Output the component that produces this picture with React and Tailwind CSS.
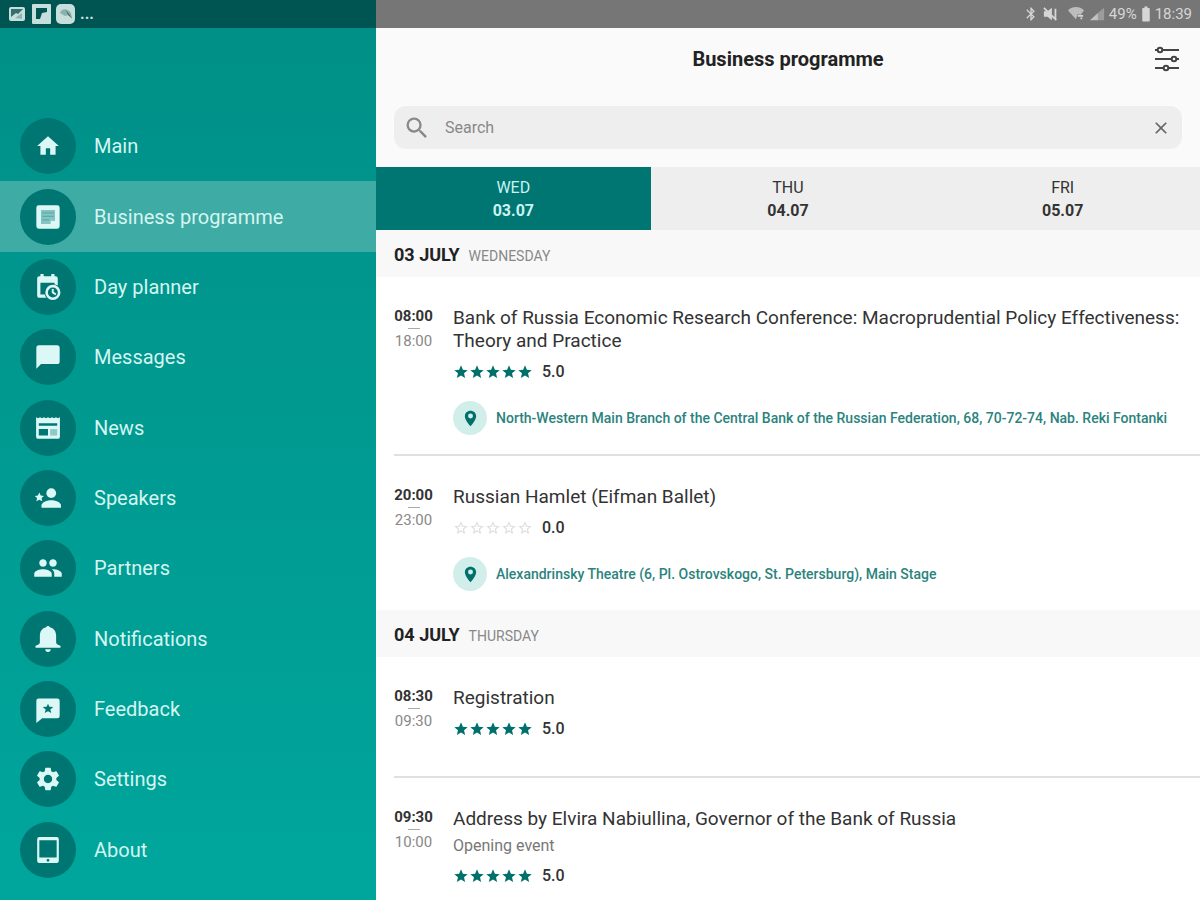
import {
  MdBatteryFull,
  MdBluetooth,
  MdChatBubble,
  MdClose,
  MdGroup,
  MdHome,
  MdSearch,
  MdSettings,
  MdStar,
  MdStarBorder,
} from "react-icons/md";

const svgProps = { viewBox: "0 0 24 24", fill: "currentColor", "aria-hidden": true };

function ProgrammeIcon({ className }) {
  return (
    <svg {...svgProps} className={className}>
      <path
        fillRule="evenodd"
        d="M4 2h16a2 2 0 0 1 2 2v16a2 2 0 0 1-2 2H4a2 2 0 0 1-2-2V4a2 2 0 0 1 2-2ZM6 6v12h8v-3h4V6Z"
      />
      <path opacity=".6" d="M6 6h12v9h-4v3H6Z" />
      <path className="text-[#007673]" fill="currentColor" opacity=".3" d="M7 8h10v1H7zM7 11h10v1H7zM7 14h6v1H7z" />
    </svg>
  );
}

function PlannerIcon({ className }) {
  return (
    <svg {...svgProps} className={className}>
      <path d="M5 0h3v2h7V0h3v2h1a2 2 0 0 1 2 2v6.500a7 7 0 0 0-3-.7V8H5v11h4a7 7 0 0 0 1.500 3H4a2 2 0 0 1-2-2V4a2 2 0 0 1 2-2h1Z" />
      <path
        fillRule="evenodd"
        d="M16.500 10a7 7 0 1 1 0 14a7 7 0 0 1 0-14Zm0 2.400a4.600 4.600 0 1 0 0 9.200a4.600 4.600 0 0 0 0-9.200Zm-1 1.400h1.800v2.900l2.400 1.400l-.9 1.500l-3.300-2Z"
      />
    </svg>
  );
}

function NewsIcon({ className }) {
  return (
    <svg {...svgProps} className={className}>
      <path
        fillRule="evenodd"
        d="M1 2l1.800 1L4.700 2l1.800 1L8.300 2l1.900 1L12 2l1.800 1L15.700 2l1.800 1L19.300 2l1.900 1L23 2v18a2 2 0 0 1-2 2H3a2 2 0 0 1-2-2ZM3.500 7.500V10h17V7.500ZM3.500 13v6H12v-6Z"
      />
      <path className="text-[#007673]" fill="currentColor" opacity=".35" d="M14 13h6.500v6H14Z" />
    </svg>
  );
}

function SpeakersIcon({ className }) {
  return (
    <svg {...svgProps} className={className}>
      <circle cx="15" cy="7.500" r="4.500" />
      <path d="M15 14c-3.300 0-9 1.600-9 4.700V21h18v-2.300C24 15.600 18.300 14 15 14Z" />
      <path d="m4 7 1.300 2.700 3 .4-2.200 2 .6 3L4 13.600l-2.700 1.500.6-3-2.200-2 3-.4Z" />
    </svg>
  );
}

function BellIcon({ className }) {
  return (
    <svg {...svgProps} className={className}>
      <path d="M12 0a2 2 0 0 1 1.700 1.200C17.400 2 19.500 5 19.500 9v6c0 1.500 1 2.500 4 3.200V20H.5v-1.800c3-.7 4-1.700 4-3.200V9c0-4 2.100-7 5.800-7.800A2 2 0 0 1 12 0ZM9.500 21.500h5a2.500 2.500 0 0 1-5 0Z" />
    </svg>
  );
}

function FeedbackIcon({ className }) {
  return (
    <svg {...svgProps} className={className}>
      <path
        fillRule="evenodd"
        d="M4 3h16a2 2 0 0 1 2 2v13a2 2 0 0 1-2 2H7l-5 4V5a2 2 0 0 1 2-2Zm8 4.500-1.200 2.500-3.300.3 2.500 2.200-.8 3 2.800-1.500 2.800 1.500-.8-3 2.500-2.200-3.300-.3Z"
      />
    </svg>
  );
}

function AboutIcon({ className }) {
  return (
    <svg {...svgProps} className={className}>
      <path
        fillRule="evenodd"
        d="M4 0h16a2 2 0 0 1 2 2v20a2 2 0 0 1-2 2H4a2 2 0 0 1-2-2V2a2 2 0 0 1 2-2Zm0 3v16h16V3Zm8 17.200a1.300 1.300 0 1 0 0 2.600a1.300 1.300 0 0 0 0-2.600Z"
      />
    </svg>
  );
}

function PinIcon({ className }) {
  return (
    <svg {...svgProps} className={className}>
      <path
        fillRule="evenodd"
        d="M12 1c4.700 0 8 3.400 8 7.800C20 14.500 12 23 12 23S4 14.500 4 8.800C4 4.400 7.300 1 12 1Zm0 4a3.500 3.500 0 1 0 0 7a3.500 3.500 0 0 0 0-7Z"
      />
    </svg>
  );
}

function FilterIcon({ className }) {
  return (
    <svg viewBox="0 0 26 26" fill="none" stroke="currentColor" strokeWidth="2" className={className} aria-hidden="true">
      <path d="M1 4h3M8 4h17M1 13h17M22 13h3M1 22h9M14 22h11" />
      <circle cx="6" cy="4" r="2.300" />
      <circle cx="20" cy="13" r="2.300" />
      <circle cx="12" cy="22" r="2.300" />
    </svg>
  );
}

const MENU = [
  { label: "Main", Icon: MdHome, size: "size-[26px]" },
  { label: "Business programme", Icon: ProgrammeIcon, size: "size-7" },
  { label: "Day planner", Icon: PlannerIcon, size: "size-[26px]" },
  { label: "Messages", Icon: MdChatBubble, size: "size-7" },
  { label: "News", Icon: NewsIcon, size: "size-[26px]" },
  { label: "Speakers", Icon: SpeakersIcon, size: "size-[26px]" },
  { label: "Partners", Icon: MdGroup, size: "size-[30px]" },
  { label: "Notifications", Icon: BellIcon, size: "size-[26px]" },
  { label: "Feedback", Icon: FeedbackIcon, size: "size-7" },
  { label: "Settings", Icon: MdSettings, size: "size-7" },
  { label: "About", Icon: AboutIcon, size: "size-[26px]" },
];

const DAYS = [
  { name: "WED", date: "03.07" },
  { name: "THU", date: "04.07" },
  { name: "FRI", date: "05.07" },
];

const PROGRAMME = [
  {
    date: "03 JULY",
    weekday: "WEDNESDAY",
    events: [
      {
        start: "08:00",
        end: "18:00",
        title: "Bank of Russia Economic Research Conference: Macroprudential Policy Effectiveness: Theory and Practice",
        rating: 5,
        venue: "North-Western Main Branch of the Central Bank of the Russian Federation, 68, 70-72-74, Nab. Reki Fontanki",
      },
      {
        start: "20:00",
        end: "23:00",
        title: "Russian Hamlet (Eifman Ballet)",
        rating: 0,
        venue: "Alexandrinsky Theatre (6, Pl. Ostrovskogo, St. Petersburg), Main Stage",
      },
    ],
  },
  {
    date: "04 JULY",
    weekday: "THURSDAY",
    events: [
      { start: "08:30", end: "09:30", title: "Registration", rating: 5 },
      {
        start: "09:30",
        end: "10:00",
        title: "Address by Elvira Nabiullina, Governor of the Bank of Russia",
        subtitle: "Opening event",
        rating: 5,
      },
    ],
  },
];

function Sidebar() {
  return (
    <aside className="flex w-94 shrink-0 flex-col bg-linear-to-b from-[#008f87] to-[#00a69c]">
      <div className="flex h-7 shrink-0 items-center gap-1 bg-[#005451] px-2 text-[#c5dfdd]">
        <svg viewBox="0 0 20 20" className="size-5" aria-hidden="true">
          <rect x="1" y="3" width="16" height="14" rx="2" fill="currentColor" />
          <path d="M3 5h12l-5 5-2-1-5 4Z" fill="#35706d" />
          <path d="m7 14 7-5v6Z" fill="#8fb5b2" />
        </svg>
        <svg viewBox="0 0 20 20" className="size-5" aria-hidden="true">
          <rect width="19" height="20" rx="1" fill="currentColor" />
          <path d="M4 4h11v4l-5 1-2 6H4Z" fill="#005451" />
        </svg>
        <svg viewBox="0 0 20 20" className="size-5" aria-hidden="true">
          <rect width="19" height="20" rx="5" fill="currentColor" />
          <path d="M4 9c1-4 7-6 11 0l1 6-4-4-3 1Z" fill="#8bb0ae" />
          <path d="m10 6 6 8-4-3Z" fill="#35706d" />
        </svg>
        <span className="text-base leading-7 font-bold">...</span>
      </div>
      <nav className="mt-[83px] mb-[15px] flex flex-1 flex-col">
        {MENU.map(({ label, Icon, size }, i) => (
          <a
            key={label}
            href="#"
            aria-current={i === 1 ? "page" : undefined}
            className={`flex flex-1 items-center gap-[18px] pl-5 text-[20px] text-[#d5f5f1] ${i === 1 ? "bg-[#3eaba5]" : ""}`}
          >
            <span className="flex size-14 items-center justify-center rounded-full bg-[#007673] text-[#dcf8f6]">
              <Icon className={size} />
            </span>
            {label}
          </a>
        ))}
      </nav>
    </aside>
  );
}

function StatusBar() {
  return (
    <div className="flex h-7 shrink-0 items-center justify-end gap-1 bg-[#767676] pr-2 text-base text-[#d6d6d6]">
      <MdBluetooth className="size-4" />
      <svg viewBox="0 0 18 18" className="size-4" aria-hidden="true">
        <path d="M1 6h4l5-4v14l-5-4H1Z" fill="currentColor" />
        <path d="m1 2 14 14M14 3v12" stroke="currentColor" strokeWidth="2" />
      </svg>
      <svg viewBox="0 0 20 18" className="ml-1 h-4 w-[18px]" aria-hidden="true">
        <path d="M1 5c5-5 13-5 18 0l-4 5-3-1-2 6Z" fill="currentColor" opacity=".75" />
        <path d="M12 11h6M15 14h2" stroke="currentColor" strokeWidth="2" />
      </svg>
      <svg viewBox="0 0 18 16" className="h-4 w-4" aria-hidden="true">
        <path d="M1 15 10 7v8Z" fill="currentColor" opacity=".8" />
        <path d="m10 7 7-6v14h-7Z" fill="currentColor" opacity=".4" />
      </svg>
      <span className="text-[15px]">49%</span>
      <MdBatteryFull className="-mx-1 size-[18px]" />
      <span className="text-[15px]">18:39</span>
    </div>
  );
}

function Rating({ value }) {
  const Star = value > 0 ? MdStar : MdStarBorder;
  return (
    <div className="mt-[10px] flex h-5 items-center gap-[9px]">
      <div className={`flex ${value > 0 ? "text-[#00706b]" : "text-[#dcdcdc]"}`}>
        {[1, 2, 3, 4, 5].map((n) => (
          <Star key={n} className="size-4" />
        ))}
      </div>
      <span className="text-base leading-5 font-medium text-[#333]">{value.toFixed(1)}</span>
    </div>
  );
}

function Event({ event }) {
  return (
    <li className="group pl-[18px]">
      <div
        className={`flex gap-5 border-[#e0e0e0] pt-[29px] group-not-last:border-b-2 ${event.venue ? "pb-[19px]" : "pb-[37px]"}`}
      >
        <div className="flex w-[39px] shrink-0 flex-col items-center text-[15px] leading-5">
          <time className="font-bold text-[#333]">{event.start}</time>
          <span className="my-[2px] h-px w-3 bg-[#aaa]" />
          <time className="text-[#888]">{event.end}</time>
        </div>
        <div className="min-w-0 flex-1">
          <h3 className="text-[19px] leading-[23px] text-[#333]">{event.title}</h3>
          {event.subtitle && <p className="mt-[6px] text-base leading-5 text-[#777]">{event.subtitle}</p>}
          <Rating value={event.rating} />
          {event.venue && (
            <a href="#" className="mt-[19px] flex items-center gap-[9px] text-[14px] font-medium text-[#2b837d]">
              <span className="flex size-[34px] shrink-0 items-center justify-center rounded-full bg-[#d2eeeb] text-[#00706b]">
                <PinIcon className="size-[17px]" />
              </span>
              {event.venue}
            </a>
          )}
        </div>
      </div>
    </li>
  );
}

export default function App() {
  return (
    <div className="flex h-screen overflow-hidden bg-white font-['Roboto',sans-serif]">
      <Sidebar />
      <main className="flex min-w-0 flex-1 flex-col overflow-hidden">
        <StatusBar />
        <header className="shrink-0 bg-[#fafafa] pb-[18px]">
          <div className="grid h-[78px] grid-cols-[1fr_auto_1fr] items-start pt-[18px]">
            <h1 className="col-start-2 text-[20px] leading-[26px] font-bold text-[#222]">Business programme</h1>
            <button type="button" aria-label="Filters" className="mr-5 justify-self-end text-[#444]">
              <FilterIcon className="size-[26px]" />
            </button>
          </div>
          <div className="mx-[18px] flex h-[43px] items-center rounded-xl bg-[#eee] pr-[11px] pl-[9px]">
            <MdSearch className="size-7 text-[#888]" />
            <input
              type="text"
              aria-label="Search"
              placeholder="Search"
              className="ml-[14px] min-w-0 flex-1 bg-transparent text-base outline-none placeholder:text-[#888]"
            />
            <button type="button" aria-label="Clear search" className="text-[#666]">
              <MdClose className="size-5" />
            </button>
          </div>
        </header>
        <div className="grid h-[63px] shrink-0 grid-cols-3">
          {DAYS.map((day, i) => (
            <button
              key={day.date}
              type="button"
              className={`flex flex-col items-center justify-center text-base leading-[23px] ${
                i === 0 ? "bg-[#007673] text-[#c9f3f0]" : "bg-[#eee] text-[#333]"
              }`}
            >
              <span>{day.name}</span>
              <span className="font-bold">{day.date}</span>
            </button>
          ))}
        </div>
        {PROGRAMME.map((section) => (
          <section key={section.date} className="shrink-0">
            <h2 className="flex h-[47px] items-baseline gap-[9px] bg-[#f8f8f8] pl-[18px] text-[18px] leading-[49px] font-bold text-[#222]">
              {section.date}
              <span className="text-[14px] font-normal text-[#888]">{section.weekday}</span>
            </h2>
            <ul>
              {section.events.map((event) => (
                <Event key={event.start} event={event} />
              ))}
            </ul>
          </section>
        ))}
      </main>
    </div>
  );
}
